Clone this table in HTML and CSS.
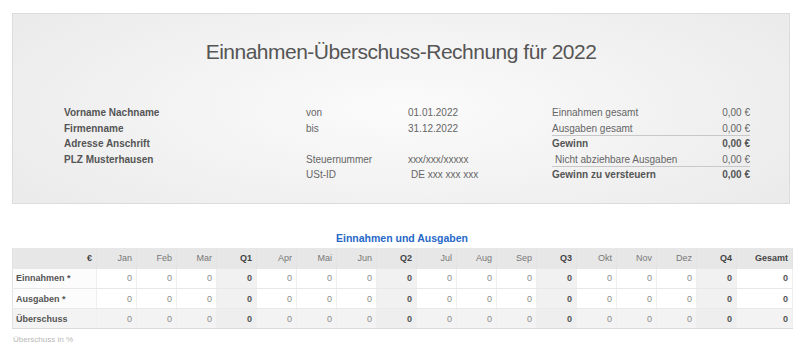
FILE: index.html
```html
<!DOCTYPE html>
<html lang="de">
<head>
<meta charset="utf-8">
<title>Einnahmen-Überschuss-Rechnung für 2022</title>
<link rel="stylesheet" href="styles.css">
</head>
<body>
<div class="page">
  <section class="panel">
    <h1 class="title">Einnahmen-Überschuss-Rechnung für 2022</h1>
    <div class="info">
      <div class="b">Vorname Nachname</div><div>von</div><div>01.01.2022</div><div class="sum"><span>Einnahmen gesamt</span><span>0,00 €</span></div>
      <div class="b">Firmenname</div><div>bis</div><div>31.12.2022</div><div class="sum line"><span>Ausgaben gesamt</span><span>0,00 €</span></div>
      <div class="b">Adresse Anschrift</div><div></div><div></div><div class="sum b"><span>Gewinn</span><span>0,00 €</span></div>
      <div class="b">PLZ Musterhausen</div><div>Steuernummer</div><div>xxx/xxx/xxxxx</div><div class="sum line"><span class="ind">Nicht abziehbare Ausgaben</span><span>0,00 €</span></div>
      <div></div><div>USt-ID</div><div class="ind">DE xxx xxx xxx</div><div class="sum b"><span>Gewinn zu versteuern</span><span>0,00 €</span></div>
    </div>
  </section>

  <h2 class="caption">Einnahmen und Ausgaben</h2>
  <table class="grid">
    <colgroup>
      <col class="c-label">
      <col class="c"><col class="c"><col class="c"><col class="c">
      <col class="c"><col class="c"><col class="c"><col class="c">
      <col class="c"><col class="c"><col class="c"><col class="c">
      <col class="c"><col class="c"><col class="c"><col class="c">
      <col class="c-total">
    </colgroup>
    <thead>
      <tr>
        <th class="cur">€</th>
        <th>Jan</th><th>Feb</th><th>Mar</th><th class="q">Q1</th>
        <th>Apr</th><th>Mai</th><th>Jun</th><th class="q">Q2</th>
        <th>Jul</th><th>Aug</th><th>Sep</th><th class="q">Q3</th>
        <th>Okt</th><th>Nov</th><th>Dez</th><th class="q">Q4</th>
        <th class="q">Gesamt</th>
      </tr>
    </thead>
    <tbody>
      <tr>
        <td class="lab">Einnahmen *</td>
        <td>0</td><td>0</td><td>0</td><td class="q">0</td>
        <td>0</td><td>0</td><td>0</td><td class="q">0</td>
        <td>0</td><td>0</td><td>0</td><td class="q">0</td>
        <td>0</td><td>0</td><td>0</td><td class="q">0</td>
        <td class="tot">0</td>
      </tr>
      <tr>
        <td class="lab">Ausgaben *</td>
        <td>0</td><td>0</td><td>0</td><td class="q">0</td>
        <td>0</td><td>0</td><td>0</td><td class="q">0</td>
        <td>0</td><td>0</td><td>0</td><td class="q">0</td>
        <td>0</td><td>0</td><td>0</td><td class="q">0</td>
        <td class="tot">0</td>
      </tr>
      <tr class="surplus">
        <td class="lab">Überschuss</td>
        <td>0</td><td>0</td><td>0</td><td class="q">0</td>
        <td>0</td><td>0</td><td>0</td><td class="q">0</td>
        <td>0</td><td>0</td><td>0</td><td class="q">0</td>
        <td>0</td><td>0</td><td>0</td><td class="q">0</td>
        <td class="tot">0</td>
      </tr>
    </tbody>
  </table>
  <div class="note">Überschuss in %</div>
</div>
</body>
</html>
```

FILE: styles.css
```css
* { box-sizing: border-box; }

html, body {
  margin: 0;
  padding: 0;
  background: #fff;
}

body {
  font-family: "Liberation Sans", Arial, Helvetica, sans-serif;
  color: #666;
}

.page {
  padding: 13px 8px 0 12px;
}

.panel {
  width: 778px;
  height: 191px;
  border: 1px solid #dcdcdc;
  background: radial-gradient(ellipse 60% 80% at 50% 50%, #fbfbfb 0%, #f3f3f3 50%, #ebebeb 100%);
  padding-top: 25px;
}

.title {
  margin: 0;
  font-size: 21px;
  line-height: 26px;
  font-weight: normal;
  color: #555;
  text-align: center;
  letter-spacing: -0.5px;
}

.info {
  margin-top: 40px;
  padding-left: 51px;
  display: grid;
  grid-template-columns: 242px 102px 144px 198px;
  grid-auto-rows: 15.5px;
  font-size: 10px;
  line-height: 15.5px;
  color: #666;
}

.info .b { font-weight: bold; color: #555; }

.ind { padding-left: 3px; }

.sum {
  display: flex;
  justify-content: space-between;
}

.sum.line { box-shadow: inset 0 -1px #c8c8c8; }

.caption {
  margin: 27px 0 3px;
  font-size: 10.5px;
  line-height: 14px;
  font-weight: bold;
  color: #2768c9;
  text-align: center;
}

.grid {
  width: 780px;
  border-collapse: collapse;
  table-layout: fixed;
  font-size: 9px;
  border-left: 1px solid #e2e2e2;
}

.c-label { width: 84px; }
.c { width: 40px; }
.c-total { width: 56px; }

.grid th, .grid td {
  height: 20px;
  padding: 0 4px 0 3px;
  text-align: right;
  vertical-align: middle;
  white-space: nowrap;
}

.grid thead th {
  background: #e7e7e7;
  font-weight: normal;
  color: #777;
  height: 20.5px;
  border-right: 1px solid #e3e3e3;
}

.grid thead th.q, .grid thead th.cur { font-weight: bold; color: #444; }

.grid td {
  color: #8a8a8a;
  border-right: 1px solid #efefef;
  border-bottom: 1px solid #e8e8e8;
  background: #fff;
}

.grid td.q {
  background: #f1f1f1;
  font-weight: bold;
  color: #555;
}

.grid td.tot {
  font-weight: bold;
  color: #555;
}

.grid td.lab {
  text-align: left;
  font-weight: bold;
  color: #555;
  background: #fcfcfc;
}

.grid tr.surplus td {
  background: #f3f3f3;
  border-top: 1px solid #dadada;
  border-bottom: 1px solid #dadada;
}

.grid tr.surplus td.q { background: #eeeeee; }

.note {
  margin-top: 6px;
  padding-left: 1px;
  font-size: 8px;
  line-height: 10px;
  color: #b8b8b8;
}
```
